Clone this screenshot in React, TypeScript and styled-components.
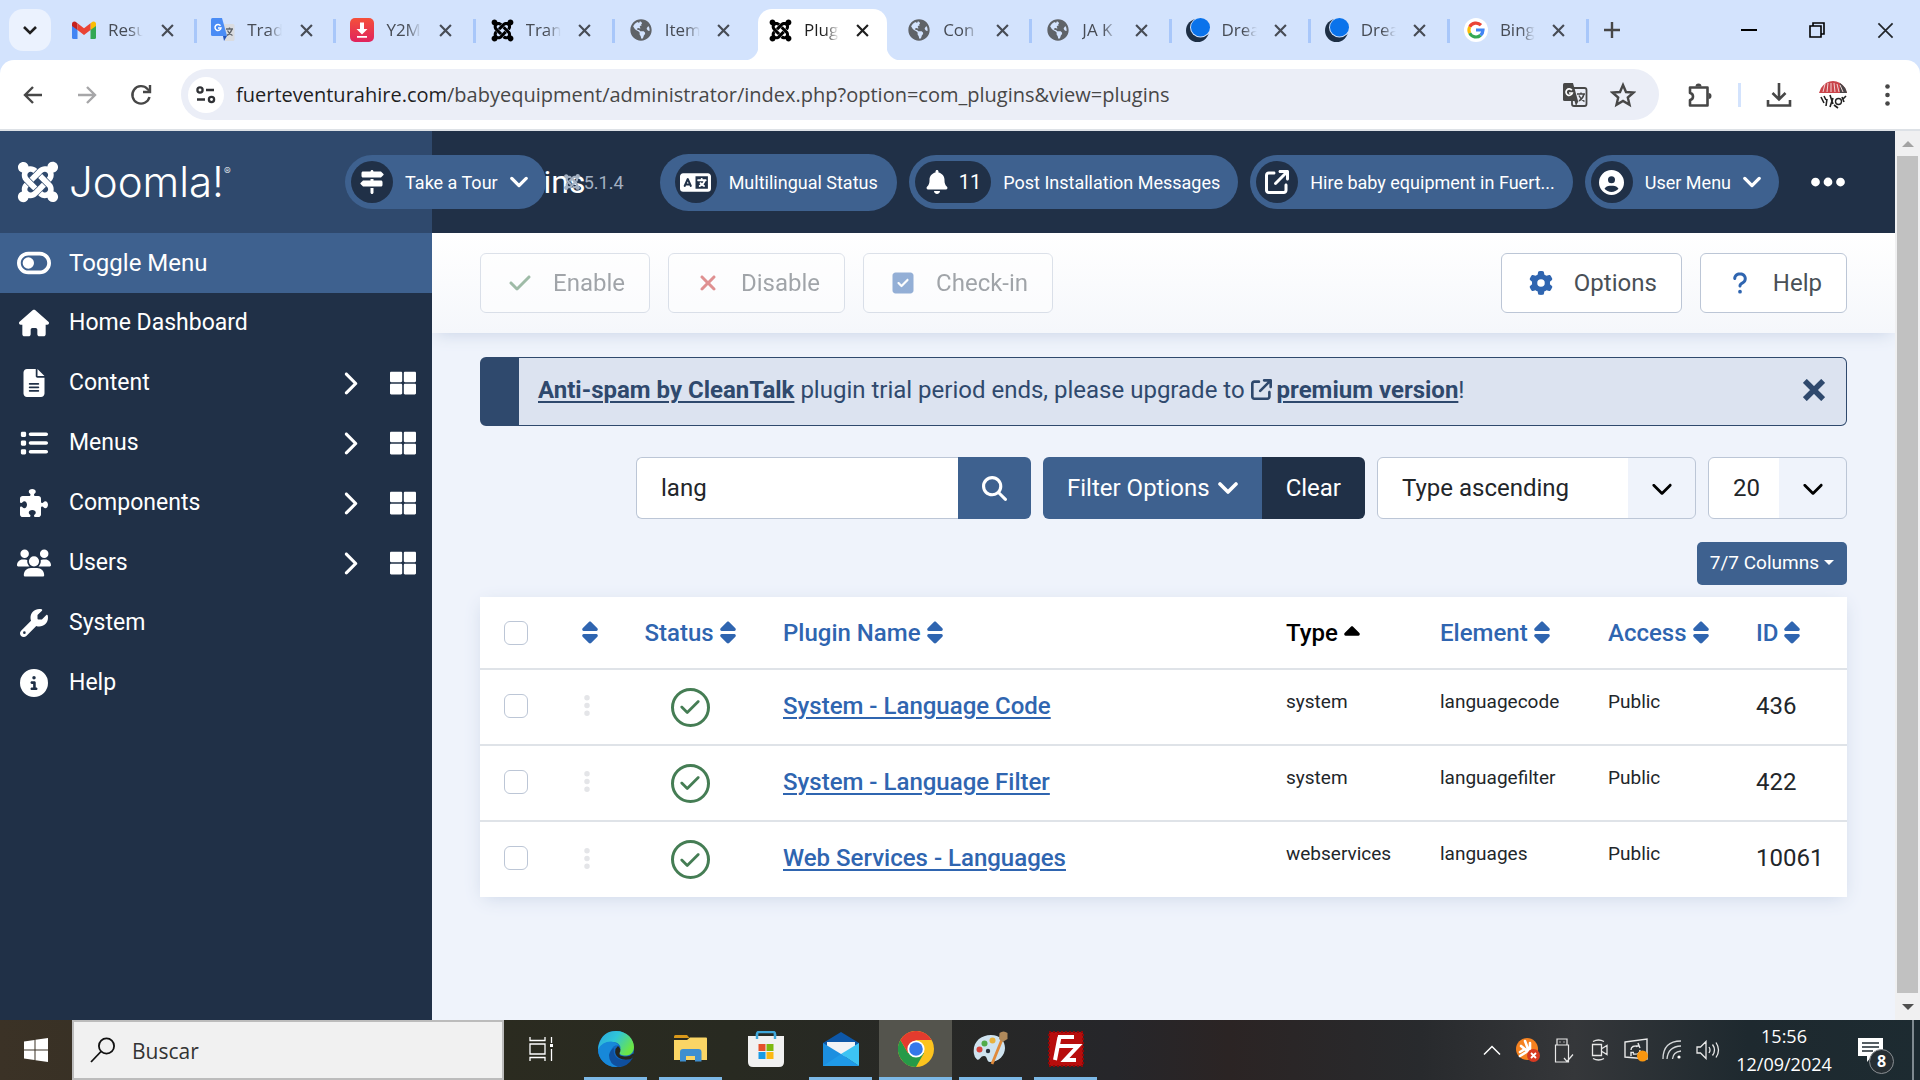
import React from "react";
import styled, { createGlobalStyle } from "styled-components";
import {
  FaArrowUpRightFromSquare,
  FaBell,
  FaCaretUp,
  FaCheck,
  FaChevronDown,
  FaChevronRight,
  FaCircleInfo,
  FaCircleUser,
  FaEllipsis,
  FaEllipsisVertical,
  FaFileLines,
  FaGear,
  FaHouse,
  FaJoomla,
  FaLanguage,
  FaList,
  FaMagnifyingGlass,
  FaPuzzlePiece,
  FaQuestion,
  FaSignsPost,
  FaSort,
  FaSquareCheck,
  FaToggleOff,
  FaUsers,
  FaWrench,
  FaXmark,
} from "react-icons/fa6";
import { FaGlobeAmericas, FaThLarge } from "react-icons/fa";

const ui = `"Open Sans", "Noto Sans", sans-serif`;
const body = `Roboto, "Noto Sans", sans-serif`;

const c = {
  navy: "#203047",
  brand: "#2f496d",
  blue: "#3e618f",
  link: "#2f65b0",
  page: "#eff3fb",
  line: "#dfe3e8",
  field: "#bcc6d6",
  text: "#22262a",
};

const GlobalStyle = createGlobalStyle`
  * { box-sizing: border-box; }
  html, body { margin: 0; height: 100%; overflow: hidden; }
  body { font-family: ${body}; color: ${c.text}; }
  button, input, select { font: inherit; color: inherit; margin: 0; }
  button { border: 0; padding: 0; background: none; cursor: pointer; }
  svg { display: block; flex: none; }
`;

const Screen = styled.div`
  height: 100vh;
  display: flex;
  flex-direction: column;
`;

/* ---------- Browser: tabs ---------- */

const TabStrip = styled.div`
  height: 60px;
  flex: none;
  display: flex;
  align-items: center;
  padding-left: 9px;
  background: #d3e3fd;
  font-family: ${ui};
`;

const TabSearch = styled.button`
  width: 42px;
  height: 42px;
  margin-right: 7px;
  border-radius: 14px;
  background: #ebf2fe;
  display: grid;
  place-items: center;
`;

const Tabs = styled.div`
  flex: 1;
  min-width: 0;
  align-self: stretch;
  display: flex;
`;

const Tab = styled.div<{ $active?: boolean; $divider?: boolean }>`
  flex: 1;
  min-width: 0;
  position: relative;
  display: flex;
  align-items: center;
  gap: 12px;
  padding-left: 14px;
  color: ${(p) => (p.$active ? "#1f1f1f" : "#474c55")};
  border-right: 3px solid transparent;
  border-image: ${(p) =>
    p.$divider
      ? "linear-gradient(to bottom, transparent 19px, #a8c7fa 19px, #a8c7fa 43px, transparent 43px) 1"
      : "none"};
  > * { position: relative; }
`;

/* The active tab's body, behind its icon and title */
const TabShape = styled.span`
  && { position: absolute; }
  inset: 9px 3px 0 4px;
  border-radius: 14px 14px 0 0;
  background: #fff;
  &::before, &::after {
    content: "";
    position: absolute;
    bottom: 0;
    width: 14px;
    height: 14px;
  }
  &::before {
    right: 100%;
    background: radial-gradient(circle at 0 0, transparent 14px, #fff 15px);
  }
  &::after {
    left: 100%;
    background: radial-gradient(circle at 100% 0, transparent 14px, #fff 15px);
  }
`;

const TabIcon = styled.span`
  width: 24px;
  flex: none;
  display: grid;
  place-items: center;
`;

const TabTitle = styled.span`
  width: 35px;
  flex: none;
  overflow: hidden;
  white-space: nowrap;
  font-size: 17px;
  line-height: 28px;
  mask-image: linear-gradient(to right, #000 60%, transparent 100%);
`;

const TabClose = styled.button`
  width: 24px;
  height: 24px;
  flex: none;
  display: grid;
  place-items: center;
`;

const StripEnd = styled.div`
  width: 331px;
  flex: none;
  display: flex;
  align-items: center;
  justify-content: space-between;
  padding-right: 1px;
`;

const IconButton = styled.button<{ $w?: number }>`
  width: ${(p) => p.$w ?? 46}px;
  height: 46px;
  display: grid;
  place-items: center;
`;

const WindowControls = styled.div`
  display: flex;
`;

/* ---------- Browser: address bar ---------- */

const AddressBar = styled.div`
  background: #d3e3fd;
  flex: none;
`;

const AddressInner = styled.div`
  height: 71px;
  border-radius: 14px 14px 0 0;
  border-bottom: 2px solid #dde1e6;
  background: #fff;
  display: flex;
  align-items: center;
  padding: 0 10px;
`;

const NavButtons = styled.div`
  display: flex;
  width: 171px;
`;

const Omnibox = styled.div`
  flex: 1;
  min-width: 0;
  height: 51px;
  border-radius: 26px;
  background: #ebeef7;
  display: flex;
  align-items: center;
  gap: 12px;
  padding: 0 12px 0 7px;
`;

const SiteInfo = styled.button`
  width: 36px;
  height: 36px;
  border-radius: 50%;
  background: #fff;
  display: grid;
  place-items: center;
`;

const Url = styled.div`
  flex: 1;
  min-width: 0;
  font: 20px/30px ${ui};
  color: #474747;
  white-space: nowrap;
  b { font-weight: 400; color: #1f1f1f; }
`;

const OmniActions = styled.div`
  display: flex;
  align-items: center;
`;

const BrowserActions = styled.div`
  display: flex;
  align-items: center;
  padding-left: 18px;
`;

const Divider = styled.span`
  width: 3px;
  height: 24px;
  margin: 0 15px;
  background: #d3e3fd;
`;

/* ---------- Page ---------- */

const Viewport = styled.div`
  flex: 1;
  min-height: 0;
  display: flex;
  background: ${c.page};
`;

const Admin = styled.div`
  flex: 1;
  min-width: 0;
  display: flex;
  flex-direction: column;
`;

const Header = styled.header`
  height: 102px;
  flex: none;
  display: flex;
  align-items: stretch;
  position: relative;
  background: ${c.navy};
  color: #fff;
`;

const Brand = styled.a`
  width: 432px;
  padding: 0 15px;
  display: flex;
  align-items: center;
  gap: 8px;
  background: ${c.brand};
  color: #fff;
  text-decoration: none;
`;

const Wordmark = styled.span`
  font: 300 42px/50px Inter, sans-serif;
  sup { font-size: 10px; line-height: 10px; vertical-align: 22px; }
`;

const PageTitle = styled.h1`
  margin: 0;
  padding: 0 48px;
  font-size: 32px;
  font-weight: 400;
  line-height: 102px;
`;

/* Header items float over the brand and the title when space is short */
const HeaderItems = styled.nav`
  position: absolute;
  top: 0;
  bottom: 0;
  right: 47px;
  display: flex;
  align-items: center;
  gap: 12px;
  font-size: 18px;
`;

const Pill = styled.button<{ $tall?: boolean }>`
  height: ${(p) => (p.$tall ? 57 : 54)}px;
  padding: 0 ${(p) => (p.$tall ? 19 : 18)}px 0 ${(p) => (p.$tall ? 15 : 6)}px;
  border-radius: 29px;
  background: ${c.blue};
  display: flex;
  align-items: center;
  gap: 12px;
  white-space: nowrap;
`;

const PillBadge = styled.span<{ $count?: boolean }>`
  min-width: 42px;
  height: 42px;
  padding: 0 ${(p) => (p.$count ? 10 : 5)}px;
  border-radius: 21px;
  background: ${c.navy};
  display: flex;
  align-items: center;
  justify-content: center;
  gap: 10px;
  font-size: 20px;
`;

const Version = styled.span`
  width: 90px;
  display: flex;
  align-items: center;
  gap: 3px;
  padding-left: 5px;
  color: #a3b0c2;
`;

const MoreButton = styled.button`
  margin-left: 17px;
`;

const Chevron = styled.svg.attrs({ viewBox: "0 0 20 14", fill: "none", stroke: "currentColor", strokeWidth: 3.6, strokeLinecap: "round", strokeLinejoin: "round" })<{ $w: number }>`
  width: ${(p) => p.$w}px;
  height: 14px;
`;

const Columns = styled.div`
  flex: 1;
  min-height: 0;
  display: flex;
`;

const Sidebar = styled.nav`
  width: 432px;
  flex: none;
  background: ${c.navy};
  color: #fff;
  font-size: 23px;
`;

const MenuRow = styled.div<{ $on?: boolean }>`
  height: 60px;
  display: flex;
  align-items: center;
  padding-right: 16px;
  background: ${(p) => (p.$on ? c.blue : "transparent")};
  font-size: ${(p) => (p.$on ? 24 : 23)}px;
`;

const MenuLink = styled.a`
  flex: 1;
  display: flex;
  align-items: center;
  gap: 17px;
  padding-left: 16px;
  line-height: 60px;
  color: inherit;
  text-decoration: none;
`;

const MenuIcon = styled.span`
  width: 36px;
  display: grid;
  place-items: center;
`;

const MenuActions = styled.span`
  display: flex;
  align-items: center;
  gap: 28px;
  a { color: inherit; }
`;

const Content = styled.div`
  flex: 1;
  min-width: 0;
  overflow: hidden;
`;

const Toolbar = styled.div`
  height: 100px;
  display: flex;
  justify-content: space-between;
  align-items: center;
  padding: 0 48px;
  background: linear-gradient(#fff, #f5f7fb);
  box-shadow: 0 5px 16px -4px #c9d4e6;
`;

const ButtonSet = styled.div`
  display: flex;
  gap: 18px;
`;

const ToolButton = styled.button<{ $tint: string }>`
  height: 60px;
  padding: 0 24px;
  display: flex;
  align-items: center;
  gap: 18px;
  border: 1px solid ${c.field};
  border-radius: 6px;
  background: #fff;
  color: #495057;
  font-size: 24px;
  &:disabled { opacity: 0.5; cursor: default; }
  span { width: 30px; display: grid; place-items: center; color: ${(p) => p.$tint}; }
`;

const Main = styled.main`
  padding: 24px 48px;
`;

const Alert = styled.div`
  height: 69px;
  display: flex;
  align-items: center;
  justify-content: space-between;
  padding: 0 21px 3px 19px;
  border: 1px solid ${c.brand};
  border-left-width: 39px;
  border-radius: 6px;
  background: #dce3f0;
  color: ${c.brand};
  font-size: 24px;
  p { margin: 0; }
  a { color: inherit; font-weight: 700; text-underline-offset: 3px; text-decoration-thickness: 2px; }
  a svg { display: inline-block; vertical-align: -2px; margin-right: 5px; }
`;

const Filters = styled.form`
  display: flex;
  justify-content: flex-end;
  gap: 12px;
  margin-top: 31px;
  font-size: 24px;
`;

const Group = styled.div`
  display: flex;
`;

const SearchField = styled.input`
  width: 322px;
  height: 62px;
  padding: 0 24px;
  border: 1px solid ${c.field};
  border-right: 0;
  border-radius: 6px 0 0 6px;
  background: #fff;
  outline: 0;
`;

const GroupButton = styled.button<{ $side?: "left" | "right"; $dark?: boolean }>`
  height: 62px;
  padding: 0 24px;
  display: flex;
  align-items: center;
  gap: 8px;
  border-radius: ${(p) => (p.$side === "left" ? "6px 0 0 6px" : "0 6px 6px 0")};
  background: ${(p) => (p.$dark ? c.navy : c.blue)};
  color: #fff;
`;

const SelectBox = styled.label<{ $w: number }>`
  position: relative;
  width: ${(p) => p.$w}px;
  select {
    width: 100%;
    height: 62px;
    padding: 0 72px 0 24px;
    appearance: none;
    border: 1px solid ${c.field};
    border-radius: 6px;
    background: linear-gradient(to left, ${c.page} 67px, #fff 67px);
  }
  svg { position: absolute; right: 23px; top: 20px; pointer-events: none; color: #000; }
`;

const ColumnsButton = styled.button`
  display: flex;
  align-items: center;
  gap: 5px;
  height: 43px;
  margin: 23px 0 12px auto;
  padding: 0 13px 2px;
  border-radius: 5px;
  background: ${c.blue};
  color: #fff;
  font-size: 19px;
  &::after {
    content: "";
    border: 5px solid transparent;
    border-top-color: #fff;
    border-bottom: 0;
  }
`;

const Table = styled.table`
  width: 100%;
  table-layout: fixed;
  border-collapse: collapse;
  background: #fff;
  box-shadow: 0 4px 18px -4px #c9d4e6;
  font-size: 24px;
  th, td { padding: 0 12px; text-align: left; white-space: nowrap; }
  th { height: 72px; font-weight: 500; }
  td { height: 76px; padding-bottom: 3px; border-top: 2px solid ${c.line}; }
`;

const Col = styled.col<{ $w?: number }>`
  width: ${(p) => (p.$w ? `${p.$w}px` : "auto")};
`;

const SortLink = styled.a<{ $active?: boolean; $center?: boolean }>`
  display: flex;
  align-items: center;
  justify-content: ${(p) => (p.$center ? "center" : "flex-start")};
  gap: 6px;
  color: ${(p) => (p.$active ? "#000" : c.link)};
  text-decoration: none;
  svg { width: 16px; height: 25px; }
`;

const Tick = styled.input`
  display: block;
  appearance: none;
  width: 24px;
  height: 24px;
  border: 1px solid ${c.field};
  border-radius: 6px;
  background: #fff;
  && { margin: 0 0 0 12px; }
`;

const Handle = styled.span`
  display: block;
  color: #e4e5e8;
  svg { width: 10px; }
`;

const StatusButton = styled.button`
  width: 39px;
  height: 39px;
  display: grid;
  place-items: center;
  border: 3px solid #457d54;
  border-radius: 50%;
  color: #457d54;
  && { margin: 3px auto 0; }
`;

const NameLink = styled.a`
  color: ${c.link};
  font-weight: 500;
  text-decoration-thickness: 2px;
  text-underline-offset: 3px;
`;

const Small = styled.span`
  display: block;
  padding-bottom: 8px;
  font-size: 19px;
  line-height: 24px;
`;

const Scrollbar = styled.div`
  width: 25px;
  flex: none;
  display: flex;
  flex-direction: column;
  align-items: center;
  background: #f0f0f1;
`;

const ScrollArrow = styled.span<{ $down?: boolean }>`
  height: ${(p) => (p.$down ? 27 : 25)}px;
  display: grid;
  place-items: center;
  &::before {
    content: "";
    border: 6px solid transparent;
    border-${(p) => (p.$down ? "top" : "bottom")}-color: ${(p) => (p.$down ? "#505050" : "#a3a3a3")};
    border-${(p) => (p.$down ? "bottom" : "top")}: 0;
  }
`;

const Thumb = styled.span`
  flex: 1;
  width: 21px;
  background: #c1c1c1;
`;

/* ---------- Taskbar ---------- */

const Taskbar = styled.footer`
  height: 60px;
  flex: none;
  display: flex;
  align-items: stretch;
  background: linear-gradient(90deg, #3b3226 0%, #2b2b20 26%, #282a21 38%, #26262a 58%, #2b2424 64%, #282a2d 74%, #35373a 82%, #1e292f 91%, #1d2b31 100%);
  color: #fff;
  font-family: ${ui};
`;

const StartButton = styled.button`
  width: 72px;
  display: grid;
  place-items: center;
`;

const TaskSearch = styled.label`
  width: 432px;
  display: flex;
  align-items: center;
  gap: 16px;
  padding: 0 16px;
  border: 2px solid #bcbcbc;
  background: #f1f1f1;
  color: #222;
  input {
    flex: 1;
    min-width: 0;
    border: 0;
    padding: 2px 0 0;
    background: none;
    outline: 0;
    font-size: 21px;
    &::placeholder { color: #333; opacity: 1; }
  }
`;

const TaskApps = styled.div`
  display: flex;
  gap: 2px;
`;

const TaskButton = styled.button<{ $open?: boolean; $active?: boolean }>`
  width: 73px;
  display: grid;
  place-items: center;
  background: ${(p) => (p.$active ? "#54544d" : "none")};
  border-bottom: 3px solid transparent;
  border-image: ${(p) =>
    p.$active
      ? "linear-gradient(#7cb8e6, #7cb8e6) 1"
      : p.$open
        ? "linear-gradient(90deg, transparent 6px, #7cb8e6 6px, #7cb8e6 67px, transparent 67px) 1"
        : "none"};
`;

const Tray = styled.div`
  margin-left: auto;
  display: flex;
  align-items: center;
`;

const TrayIcons = styled.div`
  display: flex;
  align-items: center;
  button { width: 36px; height: 60px; display: grid; place-items: center; }
`;

const Clock = styled.div`
  width: 116px;
  text-align: center;
  font-size: 18px;
  line-height: 28px;
`;

const Notifications = styled.button`
  position: relative;
  width: 70px;
  height: 60px;
  padding-left: 16px;
`;

const NoticeCount = styled.span`
  position: absolute;
  right: 18px;
  bottom: 6px;
  width: 25px;
  height: 25px;
  border: 1px solid #8a8f93;
  border-radius: 50%;
  background: #262e33;
  font-size: 16px;
  font-weight: 700;
  line-height: 23px;
  text-align: center;
`;

const ShowDesktop = styled.span`
  width: 8px;
  align-self: stretch;
  border-left: 2px solid #7f8a90;
`;

/* ---------- Drawings ---------- */

const DownMark = ({ size = 18 }: { size?: number }) => (
  <Chevron $w={size}>
    <path d="M2 3l8 8 8-8" />
  </Chevron>
);

const Cross = ({ size = 13, w = 2 }: { size?: number; w?: number }) => (
  <svg width={size} height={size} viewBox="0 0 12 12" fill="none" stroke="currentColor" strokeWidth={w}>
    <path d="M1 1l10 10M11 1L1 11" />
  </svg>
);

const GmailIcon = () => (
  <svg width="24" height="18" viewBox="0 0 24 18">
    <path d="M0 3v13.500Q0 18 1.500 18H5.500V8z" fill="#4285f4" />
    <path d="M24 3v13.500Q24 18 22.500 18H18.500V8z" fill="#34a853" />
    <path d="M18.500 2.500V9L24 5V3q0-2.500-2.500-2.500-1 0-1.500.500z" fill="#fbbc04" />
    <path d="M5.500 2.500V9L0 5V3Q0 .500 2.500.500 3.500.500 4 1z" fill="#c5221f" />
    <path d="M5.500 2.300V9l6.500 5 6.500-5V2.300L12 7.300z" fill="#ea4335" />
  </svg>
);

const TranslateTabIcon = () => (
  <svg width="24" height="24" viewBox="0 0 24 24">
    <path d="M10 6h12q1.500 0 1.500 1.500v14q0 1.500-1.500 1.500h-8z" fill="#dadce0" />
    <path d="M1.500 0H11l5 18H1.500Q0 18 0 16.500v-15Q0 0 1.500 0z" fill="#4a8cf5" />
    <path d="M12 18h4l-3 5z" fill="#2455b8" />
    <path d="M9.500 7.800A3 3 0 1 0 10 10H7" fill="none" stroke="#fff" strokeWidth="1.500" />
    <path d="M15 11h7M18.500 9.500V11M21 11q-1 4-5 6.500M16.500 12.500q1.500 3.500 5 5" fill="none" stroke="#60656b" strokeWidth="1.300" />
  </svg>
);

const DownloaderIcon = () => (
  <svg width="24" height="24" viewBox="0 0 24 24">
    <defs>
      <linearGradient id="dl" x1="0" y1="0" x2="0" y2="1">
        <stop offset="0" stopColor="#f5503a" />
        <stop offset="1" stopColor="#e0245e" />
      </linearGradient>
    </defs>
    <rect width="24" height="24" rx="5" fill="url(#dl)" />
    <path d="M10 4.500h4V11h3.500L12 16.500 6.500 11H10zM7 18h10v1.800H7z" fill="#fff" />
  </svg>
);

const DreamIcon = () => (
  <svg width="24" height="24" viewBox="0 0 24 24">
    <ellipse cx="11.500" cy="12.500" rx="11.500" ry="11.500" fill="#1d2f45" />
    <ellipse cx="14.500" cy="9.500" rx="10.500" ry="10" fill="#d3e3fd" />
    <ellipse cx="14.500" cy="9.200" rx="9.500" ry="9.200" fill="#0a73eb" />
  </svg>
);

const GoogleIcon = () => (
  <svg width="24" height="24" viewBox="0 0 24 24" fill="none" strokeWidth="3.200">
    <circle cx="12" cy="12" r="12" fill="#fff" />
    <path d="M17 7.200A7 7 0 0 0 5.700 8.900" stroke="#ea4335" />
    <path d="M5.700 8.900a7 7 0 0 0 0 6.200" stroke="#fbbc05" />
    <path d="M5.700 15.100A7 7 0 0 0 16.600 17.200" stroke="#34a853" />
    <path d="M16.600 17.200A7 7 0 0 0 19 12h-7" stroke="#4285f4" />
  </svg>
);

const BackArrow = ({ flip }: { flip?: boolean }) => (
  <svg width="20" height="20" viewBox="0 0 20 20" fill="none" stroke={flip ? "#a6a6a8" : "#474747"} strokeWidth="2.400">
    <path d={flip ? "M1 10h17M10 2l8 8-8 8" : "M19 10H2M10 2l-8 8 8 8"} />
  </svg>
);

const ReloadIcon = () => (
  <svg width="22" height="22" viewBox="0 0 22 22" fill="none" stroke="#474747" strokeWidth="2.400">
    <path d="M19.500 13A8.700 8.700 0 1 1 17.500 5L19.500 7" />
    <path d="M20 1v7h-7" />
  </svg>
);

const TuneIcon = () => (
  <svg width="20" height="18" viewBox="0 0 20 18" fill="none" stroke="#303236" strokeWidth="2.300">
    <circle cx="4" cy="4" r="2.600" />
    <path d="M10 4h8M1 13.500h8" />
    <circle cx="15.500" cy="13.500" r="2.600" />
  </svg>
);

const TranslateIcon = () => (
  <svg width="26" height="26" viewBox="0 0 26 26">
    <rect x="10" y="6" width="14.500" height="18" rx="2" fill="none" stroke="#474747" strokeWidth="1.800" />
    <path d="M2.500 1h8.500l5 18H2.500Q1 19 1 17.500v-15Q1 1 2.500 1z" fill="#474747" />
    <path d="M12.500 19h4L14 24z" fill="#474747" />
    <path d="M9.800 8.200A3.200 3.200 0 1 0 10.300 11H7" fill="none" stroke="#fff" strokeWidth="1.700" />
    <path d="M15 12h8M19 10.500V12M22 12q-1 4.500-5 7M17 13.500q1.500 4 5.500 6" fill="none" stroke="#474747" strokeWidth="1.400" />
  </svg>
);

const StarIcon = () => (
  <svg width="26" height="26" viewBox="0 0 26 26" fill="none" stroke="#474747" strokeWidth="2.400">
    <path d="M13 3l3 7 7.400.600-5.600 4.900 1.700 7.300L13 19l-6.500 3.800 1.700-7.300L2.600 10.600 10 10z" />
  </svg>
);

const ExtensionIcon = () => (
  <svg width="26" height="26" viewBox="0 0 26 26">
    <path d="M3 5.500h17.500v18H3v-5.500q3-.500 3-3.500t-3-3.500z" fill="none" stroke="#474747" strokeWidth="2.600" strokeLinejoin="round" />
    <path d="M8.500 4.500a3 3 0 0 1 6 0zM21.500 11a3 3 0 0 1 0 6z" fill="#474747" />
  </svg>
);

const DownloadIcon = () => (
  <svg width="26" height="26" viewBox="0 0 26 26" fill="none" stroke="#474747" strokeWidth="2.600">
    <path d="M13 1v16M6.500 11l6.500 6.500 6.500-6.500M2 18v5.500h22V18" />
  </svg>
);

const Avatar = () => (
  <svg width="30" height="30" viewBox="0 0 30 30" fill="none">
    <path d="M3 8Q8 1 15 1t12 7l2 5H1z" fill="#c9444a" />
    <path d="M22 3q6 4 7 10h-7z" fill="#4a4648" />
    <path d="M5 12l2-8M9 12l1-9M13 12V3M17 12l-1-9M21 12l-2-8M25 12l-3-7" stroke="#f3d5d6" />
    <path d="M3 17l3 6M6 16l2 4M9 19l-1 7M12 15l3 9M15 18l-3 9M24 17l2 5M28 16l-3 3M16 25l4 3" stroke="#222" strokeWidth="1.600" />
    <circle cx="20.500" cy="21.500" r="3" stroke="#222" strokeWidth="1.400" />
  </svg>
);

const WindowsLogo = () => (
  <svg width="24" height="24" viewBox="0 0 24 24" fill="#fff">
    <path d="M0 3.500l10.500-1.500v9.500H0zM11.500 1.800L24 0v11.500H11.500zM0 12.500h10.500V22L0 20.500zM11.500 12.500H24V24l-12.500-1.800z" />
  </svg>
);

const TaskSearchIcon = () => (
  <svg width="26" height="26" viewBox="0 0 26 26" fill="none" stroke="#111" strokeWidth="1.800">
    <circle cx="16.500" cy="9" r="7.600" />
    <path d="M11 14.500L1 25" />
  </svg>
);

const TaskViewIcon = () => (
  <svg width="24" height="24" viewBox="0 0 24 24" fill="none" stroke="#fff" strokeWidth="1.300">
    <path d="M1 0v3.500h15V0M1 24v-3.500h15V24M1 7h15v10H1zM22.500 0v6M22.500 12v12" />
    <path d="M21 7h3v3h-3z" fill="#fff" stroke="none" />
  </svg>
);

const EdgeIcon = () => (
  <svg width="36" height="36" viewBox="0 0 36 36">
    <defs>
      <linearGradient id="eg" x1="0" y1="0" x2="1" y2="0.500">
        <stop offset="0" stopColor="#2aa5dc" />
        <stop offset="0.500" stopColor="#30c6d8" />
        <stop offset="1" stopColor="#6be547" />
      </linearGradient>
    </defs>
    <circle cx="18" cy="18" r="18" fill="#1267c0" />
    <path d="M1 13Q5 0 18 0c11 0 18 8 18 16 0 6-4 8.500-8.500 8.500-4 0-7-1.500-6-4 3-5-1-9.500-6.500-9.500C8 11 3 14 0 19q0-3 1-6z" fill="url(#eg)" />
    <path d="M0 18.500Q4 10.500 13 10.500q5 .500 8 4-6-1-8 5c-2 8 5 14.500 14 14q-4 2.500-9 2.500C8 36 0 28 0 18.500z" fill="#1788d9" />
    <path d="M16 17c-2 9 6 15 17 10.500l2-1Q30 36 20 36q-9-3-9-12 1-5 5-7z" fill="#0f4f9e" />
    <path d="M20 15q4 3.500 1.500 7-1 3 5 3.500 5 .500 8.500-3l1 1-3 4.500q-7 2-12-1t-3.500-9z" fill="#26261f" />
  </svg>
);

const FolderIcon = () => (
  <svg width="33" height="27" viewBox="0 0 33 27">
    <path d="M0 1.500Q0 0 1.500 0H13l2.500 3H0z" fill="#d9981a" />
    <path d="M0 5h13l3-2.500h16q1 0 1 1V25H0z" fill="#fad565" />
    <path d="M6 26.500V17q0-3 3-3h15.500q3 0 3 3v9.500H21V21H12v5.500z" fill="#3f8fd0" />
  </svg>
);

const StoreIcon = () => (
  <svg width="36" height="36" viewBox="0 0 36 36">
    <path d="M9 7V3q0-2 2-2h14q2 0 2 2v4" fill="none" stroke="#3fa7da" strokeWidth="2.400" />
    <path d="M0 5h36v26q0 5-5 5H5q-5 0-5-5z" fill="#f1f1f1" />
    <path d="M9 3v5M27 3v5" stroke="#3fa7da" strokeWidth="2.400" />
    <path d="M10.500 13h7v7h-7z" fill="#e5502b" />
    <path d="M18.500 13h7v7h-7z" fill="#7db910" />
    <path d="M10.500 21h7v7h-7z" fill="#1a9be5" />
    <path d="M18.500 21h7v7h-7z" fill="#fcb813" />
  </svg>
);

const MailIcon = () => (
  <svg width="36" height="34" viewBox="0 0 36 34">
    <path d="M0 11L18 0l18 11v6H0z" fill="#0d57a8" />
    <path d="M4 10h28v9l-14 8L4 19z" fill="#f0f2f6" />
    <path d="M0 11l18 11L36 34H0z" fill="#1c8fe0" />
    <path d="M36 11L18 22l18 12z" fill="#3cc3f3" />
    <path d="M0 34l18-12 18 12z" fill="#1f9ae8" />
  </svg>
);

const ChromeIcon = () => (
  <svg width="36" height="36" viewBox="0 0 36 36">
    <circle cx="18" cy="18" r="18" fill="#fcc31e" />
    <path d="M2.400 9A18 18 0 0 0 18 36l8-14H10z" fill="#269a48" />
    <path d="M2.400 9A18 18 0 0 1 33.600 9H18L10 22z" fill="#e33b2e" />
    <circle cx="18" cy="18" r="8.600" fill="#fff" />
    <circle cx="18" cy="18" r="6.800" fill="#3478ea" />
  </svg>
);

const PaintIcon = () => (
  <svg width="36" height="35" viewBox="0 0 36 35">
    <path d="M1 23C-1 12 7 4 18 4c9 0 14 6 14 13S26 31 17 31c-4 0-2-6-6-6s-4 5-7 3.500Q1.500 27 1 23z" fill="#cfe3ef" />
    <circle cx="6.500" cy="18.500" r="3" fill="#d8443c" />
    <circle cx="11.500" cy="12.500" r="3" fill="#52ab4a" />
    <circle cx="19.500" cy="9.500" r="3" fill="#e8b23c" />
    <circle cx="15" cy="20" r="2.200" fill="#27313c" />
    <path d="M30 6L19 33" stroke="#e08a3a" strokeWidth="2.800" />
    <path d="M26.500 2q4-3 8 0v6l-5 3-3.500-3z" fill="#b08a5c" />
  </svg>
);

const FileZillaIcon = () => (
  <svg width="36" height="36" viewBox="0 0 36 36">
    <rect x="1" y="1" width="34" height="34" fill="#b70d0c" stroke="#8e0808" strokeWidth="2" strokeDasharray="2 2" />
    <path d="M10 6h16M9 15h13M11.500 6L7 29M20 15h10L17 29h11" fill="none" stroke="#fff" strokeWidth="4" />
  </svg>
);

const ChevronUpIcon = () => (
  <svg width="18" height="10" viewBox="0 0 18 10" fill="none" stroke="#fff" strokeWidth="1.500">
    <path d="M1 9.500l8-8 8 8" />
  </svg>
);

const AvastIcon = () => (
  <svg width="24" height="24" viewBox="0 0 24 24">
    <circle cx="11" cy="11" r="11" fill="#f58220" />
    <path d="M4 14l5-3M5 8l5 4M9 3l3 8M14 5v6M4 18l8-5" stroke="#fff" strokeWidth="2.600" strokeLinecap="round" />
    <circle cx="17.500" cy="17.500" r="6.500" fill="#d63a22" />
    <path d="M15 15l5 5M20 15l-5 5" stroke="#fff" strokeWidth="1.800" />
  </svg>
);

const UsbIcon = () => (
  <svg width="20" height="25" viewBox="0 0 20 25" fill="none" stroke="#e8e8e8" strokeWidth="1.200">
    <path d="M3 7V1h10v6M1.500 7h13v17h-13zM6 3.500v1M10 3.500v1M10 20l3 3.500 6-7" />
  </svg>
);

const MeetIcon = () => (
  <svg width="18" height="22" viewBox="0 0 18 22" fill="none" stroke="#e8e8e8" strokeWidth="1.300">
    <path d="M1.500 5.500h9v11h-9zM11 9.500l5-3v9l-5-3M2 2.500Q7.500-.500 13 2.500M2 19.500q5.500 3 11 0" />
  </svg>
);

const SyncIcon = () => (
  <svg width="25" height="24" viewBox="0 0 25 24" fill="none" stroke="#e8e8e8" strokeWidth="1.400">
    <path d="M1 4l22-3v20L1 19zM7 12q0-5 8-4l-1-3M16 10l-1-2.500-3 1M16 12q0 5-7 4M7 18v-3.500h3" />
    <circle cx="18.500" cy="18" r="5.500" fill="#f9960f" stroke="none" />
  </svg>
);

const WifiIcon = () => (
  <svg width="20" height="20" viewBox="0 0 20 20" fill="none" stroke="#d5d8da" strokeWidth="1.300">
    <path d="M1 19Q1 1 19 1M5 19Q6 6.500 19 6M10.500 19Q11 12 19 11" />
    <circle cx="17" cy="17" r="1.600" fill="#fff" stroke="none" />
  </svg>
);

const SpeakerIcon = () => (
  <svg width="24" height="20" viewBox="0 0 24 20" fill="none" stroke="#e8e8e8" strokeWidth="1.300">
    <path d="M1 7h3.500L10 1.500v17L4.500 13H1zM13 7q2 3 0 6M16.500 4.500q4 5.500 0 11M20 2.500q5 7.500 0 15" />
  </svg>
);

const MessageIcon = () => (
  <svg width="25" height="24" viewBox="0 0 25 24">
    <path d="M0 0h25v18h-11l-5 6v-6H0z" fill="#fff" />
    <path d="M4 5h17M4 9h17M4 13h11" stroke="#1e292f" strokeWidth="1.300" />
  </svg>
);

/* ---------- Data ---------- */

const tabs = [
  { title: "Resu", icon: <GmailIcon /> },
  { title: "Trad", icon: <TranslateTabIcon /> },
  { title: "Y2M", icon: <DownloaderIcon /> },
  { title: "Tran", icon: <FaJoomla size={25} color="#000" /> },
  { title: "Item", icon: <FaGlobeAmericas size={22} color="#5f6368" /> },
  { title: "Plug", icon: <FaJoomla size={25} color="#000" />, active: true },
  { title: "Con", icon: <FaGlobeAmericas size={22} color="#5f6368" /> },
  { title: "JA K", icon: <FaGlobeAmericas size={22} color="#5f6368" /> },
  { title: "Drea", icon: <DreamIcon /> },
  { title: "Drea", icon: <DreamIcon /> },
  { title: "Bing", icon: <GoogleIcon /> },
];

const menu = [
  { label: "Home Dashboard", icon: <FaHouse size={30} /> },
  { label: "Content", icon: <FaFileLines size={28} />, sub: true },
  { label: "Menus", icon: <FaList size={28} />, sub: true },
  { label: "Components", icon: <FaPuzzlePiece size={28} />, sub: true },
  { label: "Users", icon: <FaUsers size={34} />, sub: true },
  { label: "System", icon: <FaWrench size={28} /> },
  { label: "Help", icon: <FaCircleInfo size={28} /> },
];

const plugins = [
  { name: "System - Language Code", type: "system", element: "languagecode", id: 436 },
  { name: "System - Language Filter", type: "system", element: "languagefilter", id: 422 },
  { name: "Web Services - Languages", type: "webservices", element: "languages", id: 10061 },
];

const apps = [
  { name: "Edge", icon: <EdgeIcon />, open: true },
  { name: "Explorer", icon: <FolderIcon />, open: true },
  { name: "Store", icon: <StoreIcon /> },
  { name: "Mail", icon: <MailIcon />, open: true },
  { name: "Chrome", icon: <ChromeIcon />, active: true },
  { name: "Paint", icon: <PaintIcon />, open: true },
  { name: "FileZilla", icon: <FileZillaIcon />, open: true },
];

/* ---------- Sections ---------- */

const Browser = () => (
  <>
    <TabStrip>
      <TabSearch aria-label="Search tabs">
        <svg width="14" height="9" viewBox="0 0 14 9" fill="none" stroke="#1f1f1f" strokeWidth="2.600">
          <path d="M1 1l6 6 6-6" />
        </svg>
      </TabSearch>
      <Tabs>
        {tabs.map((t, i) => (
          <Tab key={i} $active={t.active} $divider={!t.active && !tabs[i + 1]?.active}>
            {t.active && <TabShape />}
            <TabIcon>{t.icon}</TabIcon>
            <TabTitle>{t.title}</TabTitle>
            <TabClose aria-label="Close tab"><Cross /></TabClose>
          </Tab>
        ))}
      </Tabs>
      <StripEnd>
        <IconButton aria-label="New tab">
          <svg width="16" height="16" viewBox="0 0 16 16" stroke="#474747" strokeWidth="2.400">
            <path d="M8 0v16M0 8h16" />
          </svg>
        </IconButton>
        <WindowControls>
          <IconButton $w={68} aria-label="Minimize">
            <svg width="16" height="2" viewBox="0 0 16 2"><path d="M0 0h16v2H0z" /></svg>
          </IconButton>
          <IconButton $w={68} aria-label="Restore">
            <svg width="16" height="16" viewBox="0 0 16 16" fill="none" stroke="#000" strokeWidth="1.600">
              <path d="M1 4h11v11H1zM4 4V1h11v11h-3" />
            </svg>
          </IconButton>
          <IconButton $w={68} aria-label="Close"><Cross size={17} w={1.2} /></IconButton>
        </WindowControls>
      </StripEnd>
    </TabStrip>
    <AddressBar>
      <AddressInner>
        <NavButtons>
          <IconButton aria-label="Back"><BackArrow /></IconButton>
          <IconButton $w={62} aria-label="Forward"><BackArrow flip /></IconButton>
          <IconButton aria-label="Reload"><ReloadIcon /></IconButton>
        </NavButtons>
        <Omnibox>
          <SiteInfo aria-label="Site information"><TuneIcon /></SiteInfo>
          <Url><b>fuerteventurahire.com</b>/babyequipment/administrator/index.php?option=com_plugins&amp;view=plugins</Url>
          <OmniActions>
            <IconButton $w={48} aria-label="Translate"><TranslateIcon /></IconButton>
            <IconButton $w={48} aria-label="Bookmark"><StarIcon /></IconButton>
          </OmniActions>
        </Omnibox>
        <BrowserActions>
          <IconButton aria-label="Extensions"><ExtensionIcon /></IconButton>
          <Divider />
          <IconButton aria-label="Downloads"><DownloadIcon /></IconButton>
          <IconButton $w={62} aria-label="Profile"><Avatar /></IconButton>
          <IconButton aria-label="Browser menu">
            <svg width="5" height="22" viewBox="0 0 5 22" fill="#474747">
              <circle cx="2.500" cy="2.500" r="2.300" /><circle cx="2.500" cy="11" r="2.300" /><circle cx="2.500" cy="19.500" r="2.300" />
            </svg>
          </IconButton>
        </BrowserActions>
      </AddressInner>
    </AddressBar>
  </>
);

const AdminHeader = () => (
  <Header>
    <Brand href="#">
      <FaJoomla size={46} />
      <Wordmark>Joomla!<sup>®</sup></Wordmark>
    </Brand>
    <PageTitle>Plugins</PageTitle>
    <HeaderItems>
      <Pill>
        <PillBadge><FaSignsPost size={24} /></PillBadge>
        Take a Tour
        <DownMark />
      </Pill>
      <Version><FaJoomla size={18} />5.1.4</Version>
      <Pill $tall>
        <PillBadge><FaLanguage size={31} /></PillBadge>
        Multilingual Status
      </Pill>
      <Pill>
        <PillBadge $count><FaBell size={24} />11</PillBadge>
        Post Installation Messages
      </Pill>
      <Pill>
        <PillBadge><FaArrowUpRightFromSquare size={24} /></PillBadge>
        Hire baby equipment in Fuert...
      </Pill>
      <Pill>
        <PillBadge><FaCircleUser size={25} /></PillBadge>
        User Menu
        <DownMark />
      </Pill>
      <MoreButton aria-label="More"><FaEllipsis size={40} /></MoreButton>
    </HeaderItems>
  </Header>
);

const SideMenu = () => (
  <Sidebar>
    <MenuRow $on>
      <MenuLink href="#"><MenuIcon><FaToggleOff size={34} /></MenuIcon>Toggle Menu</MenuLink>
    </MenuRow>
    {menu.map((m) => (
      <MenuRow key={m.label}>
        <MenuLink href="#"><MenuIcon>{m.icon}</MenuIcon>{m.label}</MenuLink>
        {m.sub && (
          <MenuActions>
            <FaChevronRight size={25} />
            <a href="#" aria-label={`${m.label} dashboard`}><FaThLarge size={26} /></a>
          </MenuActions>
        )}
      </MenuRow>
    ))}
  </Sidebar>
);

const Sorter = ({ label, center }: { label?: string; center?: boolean }) => (
  <SortLink href="#" $center={center} aria-label={label ?? "Ordering"}>
    {label}
    <FaSort />
  </SortLink>
);

const PluginTable = () => (
  <Table>
    <colgroup>
      <Col $w={90} /><Col $w={39} /><Col $w={162} /><Col /><Col $w={154} /><Col $w={168} /><Col $w={148} /><Col $w={103} />
    </colgroup>
    <thead>
      <tr>
        <th><Tick type="checkbox" aria-label="Check all items" /></th>
        <th><Sorter center /></th>
        <th><Sorter label="Status" center /></th>
        <th><Sorter label="Plugin Name" /></th>
        <th><SortLink href="#" $active>Type<FaCaretUp /></SortLink></th>
        <th><Sorter label="Element" /></th>
        <th><Sorter label="Access" /></th>
        <th><Sorter label="ID" /></th>
      </tr>
    </thead>
    <tbody>
      {plugins.map((p) => (
        <tr key={p.id}>
          <td><Tick type="checkbox" aria-label={`Select ${p.name}`} /></td>
          <td><Handle><FaEllipsisVertical size={25} /></Handle></td>
          <td><StatusButton aria-label="Enabled"><FaCheck size={22} /></StatusButton></td>
          <td><NameLink href="#">{p.name}</NameLink></td>
          <td><Small>{p.type}</Small></td>
          <td><Small>{p.element}</Small></td>
          <td><Small>Public</Small></td>
          <td>{p.id}</td>
        </tr>
      ))}
    </tbody>
  </Table>
);

const PluginsPage = () => (
  <Content>
    <Toolbar>
      <ButtonSet>
        <ToolButton disabled $tint="#457d54"><span><FaCheck size={24} /></span>Enable</ToolButton>
        <ToolButton disabled $tint="#c52827"><span><FaXmark size={24} /></span>Disable</ToolButton>
        <ToolButton disabled $tint={c.link}><span><FaSquareCheck size={24} /></span>Check-in</ToolButton>
      </ButtonSet>
      <ButtonSet>
        <ToolButton $tint={c.link}><span><FaGear size={24} /></span>Options</ToolButton>
        <ToolButton $tint={c.link}><span><FaQuestion size={24} /></span>Help</ToolButton>
      </ButtonSet>
    </Toolbar>
    <Main>
      <Alert>
        <p>
          <a href="#">Anti-spam by CleanTalk</a> plugin trial period ends, please upgrade to{" "}
          <a href="#"><FaArrowUpRightFromSquare size={21} />premium version</a>!
        </p>
        <button aria-label="Close"><Cross size={22} w={3} /></button>
      </Alert>
      <Filters onSubmit={(e) => e.preventDefault()}>
        <Group>
          <SearchField aria-label="Search" defaultValue="lang" />
          <GroupButton $side="right" aria-label="Search"><FaMagnifyingGlass size={25} /></GroupButton>
        </Group>
        <Group>
          <GroupButton type="button" $side="left">Filter Options<DownMark size={20} /></GroupButton>
          <GroupButton type="button" $side="right" $dark>Clear</GroupButton>
        </Group>
        <SelectBox $w={319}>
          <select aria-label="Sort by"><option>Type ascending</option></select>
          <FaChevronDown size={22} />
        </SelectBox>
        <SelectBox $w={139}>
          <select aria-label="Items per page"><option>20</option></select>
          <FaChevronDown size={22} />
        </SelectBox>
      </Filters>
      <ColumnsButton>7/7 Columns</ColumnsButton>
      <PluginTable />
    </Main>
  </Content>
);

const WindowsTaskbar = () => (
  <Taskbar>
    <StartButton aria-label="Start"><WindowsLogo /></StartButton>
    <TaskSearch>
      <TaskSearchIcon />
      <input aria-label="Buscar" placeholder="Buscar" />
    </TaskSearch>
    <TaskApps>
      <TaskButton aria-label="Task view"><TaskViewIcon /></TaskButton>
      {apps.map((a) => (
        <TaskButton key={a.name} aria-label={a.name} $open={a.open} $active={a.active}>{a.icon}</TaskButton>
      ))}
    </TaskApps>
    <Tray>
      <TrayIcons>
        <button aria-label="Show hidden icons"><ChevronUpIcon /></button>
        <button aria-label="Antivirus"><AvastIcon /></button>
        <button aria-label="USB"><UsbIcon /></button>
        <button aria-label="Meet now"><MeetIcon /></button>
        <button aria-label="Updates"><SyncIcon /></button>
        <button aria-label="Network"><WifiIcon /></button>
        <button aria-label="Volume"><SpeakerIcon /></button>
      </TrayIcons>
      <Clock>15:56<br />12/09/2024</Clock>
      <Notifications aria-label="Notifications">
        <MessageIcon />
        <NoticeCount>8</NoticeCount>
      </Notifications>
      <ShowDesktop />
    </Tray>
  </Taskbar>
);

export default function App() {
  return (
    <Screen>
      <GlobalStyle />
      <Browser />
      <Viewport>
        <Admin>
          <AdminHeader />
          <Columns>
            <SideMenu />
            <PluginsPage />
          </Columns>
        </Admin>
        <Scrollbar>
          <ScrollArrow />
          <Thumb />
          <ScrollArrow $down />
        </Scrollbar>
      </Viewport>
      <WindowsTaskbar />
    </Screen>
  );
}
